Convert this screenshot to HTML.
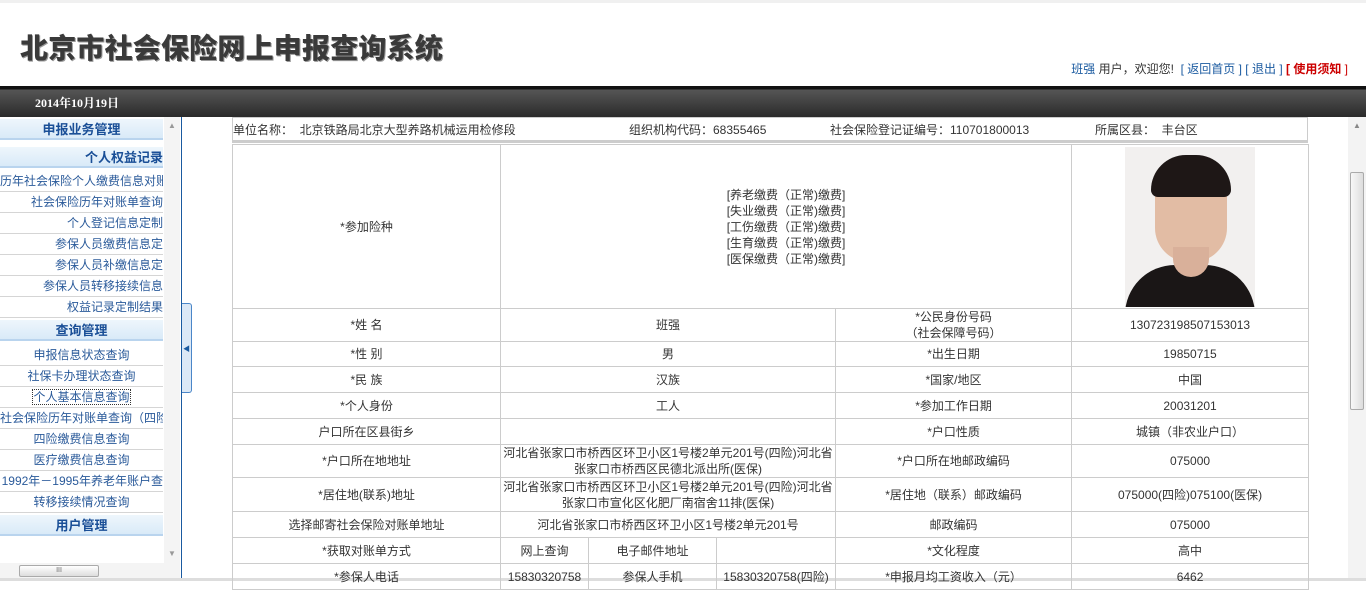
<!DOCTYPE html>
<html><head><meta charset="utf-8"><style>
*{margin:0;padding:0;box-sizing:border-box}
body{width:1366px;height:581px;overflow:hidden;background:#fff;font-family:"Liberation Sans","Noto Sans CJK SC","WenQuanYi Zen Hei",sans-serif;font-size:12px;color:#333;position:relative}
.a{position:absolute}
.title{left:20px;top:27px;font-size:28px;font-weight:900;color:#3a3a3a;letter-spacing:0.2px;text-shadow:1px 1px 0 #999}
.top{left:0;top:0;width:1366px;height:3px;background:#f0f0f0}
.bar{left:0;top:86px;width:1366px;height:31px;background:linear-gradient(#111 0,#111 3px,#555 4px,#444 15px,#2a2a2a 31px)}
.side{left:0;top:117px;width:180px;height:464px;background:#fff}
.h{position:absolute;left:0;width:163px;height:22px;background:linear-gradient(#eef6fc,#d9eaf8);border-top:1px solid #fff;border-bottom:2px solid #b9d4ee;color:#1a4f97;font-weight:bold;font-size:13px;text-align:center;line-height:21px}
.it{position:absolute;left:0;width:163px;height:21px;border-bottom:1px solid #d5d5d5;color:#2a5a9a;text-align:right;line-height:20px;white-space:nowrap;overflow:hidden;font-size:12px}
table{border-collapse:collapse;position:absolute;left:232px;width:1076px;table-layout:fixed}
td{border:1px solid #ccc;text-align:center;font-size:12px;color:#333;line-height:16px;padding:0}
</style></head><body>
<div class="a top"></div>
<div class="a title">北京市社会保险网上申报查询系统</div>
<div class="a" style="right:18px;top:60px;font-size:12px;color:#333"><span style="color:#1a5aa0">班强</span> 用户，欢迎您! &nbsp;<span style="color:#1a5aa0">[ 返回首页 ] [ 退出 ] </span><span style="color:#c00;font-weight:bold">[ 使用须知 </span><span style="color:#c00">]</span></div>
<div class="a bar"></div>
<div class="a" style="left:35px;top:94px;color:#fff;font-weight:bold;font-size:12px;font-family:'Liberation Serif','Noto Serif CJK SC',serif">2014年10月19日</div>
<div class="a side">
<div class="h" style="top:1px">申报业务管理</div>
<div class="h" style="top:29px;text-align:right;padding-right:0">个人权益记录</div>
<div class="it" style="top:54px">历年社会保险个人缴费信息对账</div>
<div class="it" style="top:75px">社会保险历年对账单查询</div>
<div class="it" style="top:96px">个人登记信息定制</div>
<div class="it" style="top:117px">参保人员缴费信息定</div>
<div class="it" style="top:138px">参保人员补缴信息定</div>
<div class="it" style="top:159px">参保人员转移接续信息</div>
<div class="it" style="top:180px">权益记录定制结果</div>
<div class="h" style="top:202px">查询管理</div>
<div class="it" style="top:228px;text-align:center">申报信息状态查询</div>
<div class="it" style="top:249px;text-align:center">社保卡办理状态查询</div>
<div class="it" style="top:270px;text-align:center"><span style="outline:1px dotted #333">个人基本信息查询</span></div>
<div class="it" style="top:291px;text-align:left">社会保险历年对账单查询（四险</div>
<div class="it" style="top:312px;text-align:center">四险缴费信息查询</div>
<div class="it" style="top:333px;text-align:center">医疗缴费信息查询</div>
<div class="it" style="top:354px;text-align:right">1992年－1995年养老年账户查</div>
<div class="it" style="top:375px;text-align:center">转移接续情况查询</div>
<div class="h" style="top:397px">用户管理</div>
<div class="a" style="left:164px;top:0;width:16px;height:447px;background:#f4f4f4"></div>
<div class="a" style="left:168px;top:4px;color:#999;font-size:8px">▲</div>
<div class="a" style="left:168px;top:432px;color:#999;font-size:8px">▼</div>
<div class="a" style="left:0;top:446px;width:180px;height:16px;background:#f4f4f4"></div>
<div class="a" style="left:19px;top:448px;width:80px;height:12px;border:1px solid #aaa;border-radius:2px;background:linear-gradient(#fff,#ddd);font-size:7px;text-align:center;line-height:10px;color:#666">III</div>
</div>
<div class="a" style="left:181px;top:117px;width:1px;height:464px;background:#1a5aa0"></div>
<div class="a" style="left:182px;top:303px;width:10px;height:90px;border:1px solid #4a86c8;border-left:none;border-radius:0 3px 3px 0;background:#dbe8f6"></div>
<div class="a" style="left:183px;top:344px;font-size:7px;color:#1a5aa0">◀</div>
<div class="a" style="left:1348px;top:117px;width:18px;height:464px;background:#f3f3f3"></div>
<div class="a" style="left:1353px;top:121px;font-size:8px;color:#888">▲</div>
<div class="a" style="left:1350px;top:172px;width:14px;height:238px;border:1px solid #aaa;border-radius:2px;background:linear-gradient(90deg,#f8f8f8,#ddd)"></div>
<div class="a" style="left:0;top:578px;width:1366px;height:3px;background:#ddd"></div>

<div class="a" style="left:232px;top:117px;width:1076px;height:26px;border:1px solid #ccc;border-bottom:3px solid #ccc;font-size:12px;line-height:24px;white-space:nowrap">
<span class="a" style="left:0">单位名称： &nbsp;北京铁路局北京大型养路机械运用检修段</span>
<span class="a" style="left:396px">组织机构代码：68355465</span>
<span class="a" style="left:597px">社会保险登记证编号：110701800013</span>
<span class="a" style="left:862px">所属区县： &nbsp;丰台区</span>
</div>
<table style="top:144px">
<colgroup><col style="width:268px"><col style="width:88px"><col style="width:128px"><col style="width:119px"><col style="width:236px"><col style="width:237px"></colgroup>
<tr style="height:164px"><td>*参加险种</td><td colspan="4">[养老缴费（正常)缴费]<br>[失业缴费（正常)缴费]<br>[工伤缴费（正常)缴费]<br>[生育缴费（正常)缴费]<br>[医保缴费（正常)缴费]</td><td><div style="margin:0 auto;width:130px;height:160px;position:relative;overflow:hidden;background:#f2f0ef">
<div class="a" style="left:30px;top:15px;width:72px;height:100px;border-radius:36px 36px 34px 34px;background:#e2bca4"></div>
<div class="a" style="left:26px;top:8px;width:80px;height:42px;border-radius:40px 40px 8px 8px;background:#1e1716"></div>
<div class="a" style="left:0;top:118px;width:130px;height:60px;border-radius:50px 50px 0 0;background:#1a1616"></div>
<div class="a" style="left:48px;top:100px;width:36px;height:30px;background:#d9b09a;border-radius:0 0 18px 18px"></div>
</div></td></tr>
<tr style="height:32px"><td>*姓 名</td><td colspan="3">班强</td><td>*公民身份号码<br>（社会保障号码）</td><td>130723198507153013</td></tr>
<tr style="height:25px"><td>*性 别</td><td colspan="3">男</td><td>*出生日期</td><td>19850715</td></tr>
<tr style="height:26px"><td>*民 族</td><td colspan="3">汉族</td><td>*国家/地区</td><td>中国</td></tr>
<tr style="height:26px"><td>*个人身份</td><td colspan="3">工人</td><td>*参加工作日期</td><td>20031201</td></tr>
<tr style="height:26px"><td>户口所在区县街乡</td><td colspan="3"></td><td>*户口性质</td><td>城镇（非农业户口）</td></tr>
<tr style="height:33px"><td>*户口所在地地址</td><td colspan="3">河北省张家口市桥西区环卫小区1号楼2单元201号(四险)河北省<br>张家口市桥西区民德北派出所(医保)</td><td>*户口所在地邮政编码</td><td>075000</td></tr>
<tr style="height:34px"><td>*居住地(联系)地址</td><td colspan="3">河北省张家口市桥西区环卫小区1号楼2单元201号(四险)河北省<br>张家口市宣化区化肥厂南宿舍11排(医保)</td><td>*居住地（联系）邮政编码</td><td>075000(四险)075100(医保)</td></tr>
<tr style="height:26px"><td>选择邮寄社会保险对账单地址</td><td colspan="3">河北省张家口市桥西区环卫小区1号楼2单元201号</td><td>邮政编码</td><td>075000</td></tr>
<tr style="height:26px"><td>*获取对账单方式</td><td>网上查询</td><td>电子邮件地址</td><td></td><td>*文化程度</td><td>高中</td></tr>
<tr style="height:26px"><td>*参保人电话</td><td>15830320758</td><td>参保人手机</td><td>15830320758(四险)</td><td>*申报月均工资收入（元）</td><td>6462</td></tr>
</table>
</body></html>
